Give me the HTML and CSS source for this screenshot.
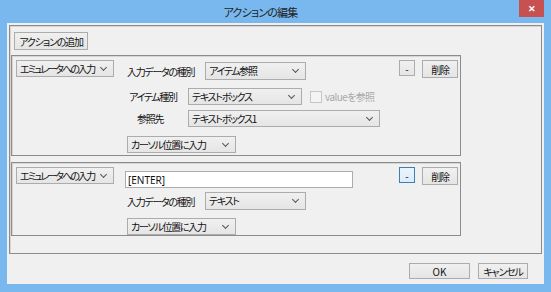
FILE: index.html
```html
<!DOCTYPE html>
<html lang="ja">
<head>
  <meta charset="UTF-8">
  <title>アクションの編集</title>
  <link rel="stylesheet" href="styles.css">
</head>
<body>

  <div class="window">
    <div class="titlebar">
      <span class="title">アクションの編集</span>
      <span class="close-btn">✕</span>
    </div>

    <div class="client">
      <div class="actions-panel">
        <button class="btn add-btn">アクションの追加</button>

        <!-- action 1 -->
        <div class="action action-ref">
          <div class="combo type-combo">エミュレータへの入力</div>
          <div class="action-body">
            <div class="row">
              <span class="label">入力データの種別</span>
              <div class="combo kind-combo">アイテム参照</div>
            </div>
            <div class="ref-grid">
              <span class="label">アイテム種別</span>
              <div class="ref-line">
                <div class="combo item-combo">テキストボックス</div>
                <label class="check disabled"><span class="check-box"></span>valueを参照</label>
              </div>
              <span class="label label-target">参照先</span>
              <div class="combo target-combo">テキストボックス1</div>
            </div>
            <div class="combo cursor-combo">カーソル位置に入力</div>
          </div>
          <div class="action-buttons">
            <button class="btn minus-btn">-</button>
            <button class="btn del-btn">削除</button>
          </div>
        </div>

        <!-- action 2 -->
        <div class="action action-text">
          <div class="combo type-combo">エミュレータへの入力</div>
          <div class="action-body">
            <input class="textbox" type="text" value="[ENTER]">
            <div class="row">
              <span class="label">入力データの種別</span>
              <div class="combo kind-combo">テキスト</div>
            </div>
            <div class="combo cursor-combo">カーソル位置に入力</div>
          </div>
          <div class="action-buttons">
            <button class="btn minus-btn focused">-</button>
            <button class="btn del-btn">削除</button>
          </div>
        </div>
      </div>

      <div class="dialog-buttons">
        <button class="btn ok-btn">OK</button>
        <button class="btn cancel-btn">キャンセル</button>
      </div>
    </div>
  </div>

</body>
</html>
```

FILE: styles.css
```css
/* Reset */
* {
  margin: 0;
  padding: 0;
  box-sizing: border-box;
  font-family: 'Noto Sans CJK JP', 'Noto Sans', sans-serif;
  font-feature-settings: "palt";
}

body {
  background-color: #78b8ee;
  width: 551px;
  height: 292px;
  overflow: hidden;
}

/* Window frame */
.window {
  width: 551px;
  height: 292px;
  display: flex;
  flex-direction: column;
  background-color: #78b8ee;
}

.titlebar {
  height: 23px;
  position: relative;
  text-align: center;
  font-size: 11px;
  line-height: 25px;
  color: #222;
  padding-right: 30px;
}

.title {
  letter-spacing: -0.8px;
}

.close-btn {
  position: absolute;
  top: 0;
  right: 7px;
  width: 25px;
  height: 17px;
  background-color: #c75050;
  color: #fff;
  font-size: 9px;
  font-weight: 700;
  line-height: 17px;
  text-align: center;
}

.client {
  flex: 1;
  margin: 0 7px 8px 7px;
  background-color: #f0f0f0;
  padding: 2px 2px 0 2px;
}

.actions-panel {
  height: 229px;
  border: 1px solid #8c8c8c;
  box-shadow: inset 1px 1px 0 #d6d6d6;
  padding: 6px 0 0 1px;
}

/* Common controls */
.btn {
  display: block;
  border: 1px solid #acacac;
  background: linear-gradient(#f0f0f0, #e5e5e5);
  font-size: 10px;
  letter-spacing: -1.2px;
  color: #111;
  height: 18px;
  line-height: 15px;
  padding: 0;
  white-space: nowrap;
  text-align: center;
}

.combo {
  position: relative;
  height: 17px;
  border: 1px solid #acacac;
  background: linear-gradient(#f0f0f0, #e5e5e5);
  font-size: 10px;
  letter-spacing: -1.3px;
  line-height: 15px;
  padding-left: 3px;
  color: #111;
  white-space: nowrap;
}

.combo::after {
  content: "";
  position: absolute;
  right: 7px;
  top: 4px;
  width: 4px;
  height: 4px;
  border-right: 1.5px solid #555;
  border-bottom: 1.5px solid #555;
  transform: rotate(45deg);
}

.label {
  font-size: 10px;
  letter-spacing: -1.3px;
  color: #111;
  white-space: nowrap;
}

/* Actions */
.add-btn {
  width: 74px;
  height: 18px;
  margin-left: 3px;
}

.action {
  display: flex;
  width: 450px;
  margin-top: 5px;
  border: 1px solid #8c8c8c;
  box-shadow: inset 1px 1px 0 #d6d6d6;
  padding: 4px 2px 0 4px;
}

.action-ref { height: 101px; }
.action-text { height: 74px; margin-top: 6px; }

.type-combo {
  width: 98px;
  flex-shrink: 0;
  letter-spacing: -1.9px;
}

.action-body {
  margin-left: 13px;
  width: 270px;
}

.row {
  display: flex;
  align-items: center;
}

.row .label {
  width: 78px;
}

.action-ref .row {
  margin-top: 2px;
}

.kind-combo {
  width: 101px;
  height: 18px;
}

.ref-grid {
  display: grid;
  grid-template-columns: 61px auto;
  row-gap: 5px;
  align-items: center;
  margin-top: 8px;
}

.ref-grid .label {
  padding-left: 2px;
}

.ref-grid .label-target {
  padding-left: 10px;
}

.ref-line {
  display: flex;
  align-items: center;
}

.item-combo {
  width: 114px;
}

.target-combo {
  width: 192px;
}

.check {
  display: flex;
  align-items: center;
  margin-left: 8px;
  font-size: 10px;
  letter-spacing: -0.6px;
  white-space: nowrap;
}

.check.disabled {
  color: #a8a8a8;
}

.check-box {
  width: 12px;
  height: 12px;
  border: 1px solid #c6c6c6;
  background-color: #f4f4f4;
  margin-right: 3px;
}

.cursor-combo {
  width: 109px;
  margin-top: 9px;
}

.textbox {
  display: block;
  width: 228px;
  height: 17px;
  margin-top: 4px;
  margin-left: -2px;
  border: 1px solid #acacac;
  background-color: #fff;
  font-size: 10px;
  padding-left: 2px;
  color: #111;
  outline: none;
  font-family: 'Noto Sans', sans-serif;
}

.action-text .row {
  margin-top: 4px;
}

.action-text .cursor-combo {
  margin-top: 8px;
}

.action-buttons {
  display: flex;
  align-items: flex-start;
  margin-left: auto;
  gap: 7px;
}

.minus-btn {
  width: 16px;
  height: 16px;
  line-height: 13px;
  letter-spacing: 0;
}

.minus-btn.focused {
  border-color: #3c7fb1;
  background: linear-gradient(#eaf4fb, #dcecfc);
}

.del-btn {
  width: 36px;
}

/* Bottom buttons */
.dialog-buttons {
  display: flex;
  justify-content: flex-end;
  gap: 8px;
  padding: 9px 14px 0 0;
}

.ok-btn {
  width: 61px;
  height: 16px;
  letter-spacing: 0;
}

.cancel-btn {
  width: 50px;
  height: 16px;
}
```
